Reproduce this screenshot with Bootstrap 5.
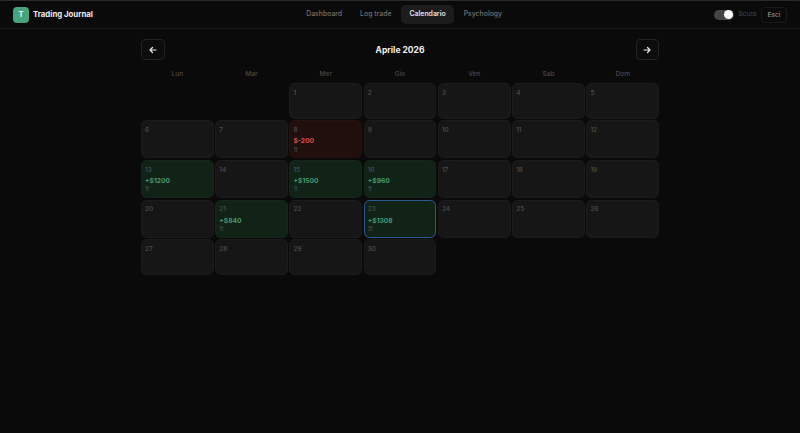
<!doctype html>
<html lang="it"><head><meta charset="utf-8"><title>Trading Journal</title>
<link rel="stylesheet" href="https://cdn.jsdelivr.net/npm/bootstrap@5.3.0/dist/css/bootstrap.min.css">
<style>
html,body{height:100%}
body{background:#0a0a0a;font-family:Inter,"Liberation Sans",sans-serif;color:#f2f2f2;border-top:1px solid #2a2a2a;overflow:hidden}
.topbar{height:28px;padding:0 13px;border-bottom:1px solid #1a1a1a}
.logo{width:16px;height:16px;border-radius:4px;background:#46a37c;color:#e9f5ef;font-size:7.5px;font-weight:700}
.brand{font-size:7.8px;font-weight:700;color:#eee;margin-left:4px}
.tabs{gap:2px;padding-left:1px}
.tab{font-size:6.9px;font-weight:500;color:#707070;padding:0 8px;height:18.7px;line-height:18.7px;border-radius:5px;text-decoration:none}
.tab.active{background:#1c1c1c;color:#e4e4e4;font-weight:600}
.sw{width:19.5px;height:10px;border-radius:5px;background:#444}
.knob{width:9px;height:9px;border-radius:50%;background:#fff;margin:.5px 1px .5px auto}
.mode{font-size:6.6px;color:#4a4a4a;margin:0 4.5px}
.logout{font-size:6.6px;font-weight:500;color:#8c8c8c;border:1px solid #1b1b1b;border-radius:4px;padding:0;width:26px;height:16px;line-height:14px;background:transparent}
.wrap{width:518px;margin:0 auto;padding-top:10.3px}
.navbtn{width:23.5px;height:20.5px;border:1px solid #222;border-radius:4px;background:#0c0c0c;padding:0}
.month{font-size:8.5px;font-weight:700;color:#f2f2f2;padding-top:1px}
.dow{font-size:6.6px;color:#484848;font-weight:500;text-align:center;line-height:8px}
.cal{display:grid;grid-template-columns:repeat(7,1fr);gap:1.7px}
.hdr{height:23.2px;padding-top:10.5px}
.cell{min-height:35.6px;border-radius:5.5px;background:#161616;border:1px solid #1c1c1c;padding:5.7px 3px 4px;line-height:1}
.num{font-size:6.4px;color:#505050;font-weight:500;display:block;margin-bottom:3.3px;height:7px;line-height:7px}
.pnl{font-size:6.7px;font-weight:700;display:block;height:9px;line-height:9px}
.tr{font-size:5.5px;color:#525252;display:block;margin-top:1.5px;line-height:5.5px}
.win{background:#112217;border-color:#14271a}
.win .pnl{color:#429c74}
.loss{background:#200f0d;border-color:#271210}
.loss .pnl{color:#d84f4f}
.today{border-color:#2c5a94}
.empty{background:none;border:0}
</style></head><body>
<nav class="topbar d-flex align-items-center">
  <div class="d-flex align-items-center"><span class="logo d-flex align-items-center justify-content-center">T</span><span class="brand">Trading Journal</span></div>
  <div class="tabs d-flex align-items-center flex-grow-1 justify-content-center">
    <a class="tab" href="#">Dashboard</a><a class="tab" href="#">Log trade</a><a class="tab active" href="#">Calendario</a><a class="tab" href="#">Psychology</a>
  </div>
  <div class="d-flex align-items-center"><span class="sw d-flex"><span class="knob"></span></span><span class="mode">Scuro</span><button class="logout btn">Esci</button></div>
</nav>
<main class="wrap">
  <div class="d-flex justify-content-between align-items-center">
    <button class="navbtn btn d-flex align-items-center justify-content-center" aria-label="Precedente"><svg width="8" height="8" viewBox="0 0 16 16" fill="none" stroke="#e8e8e8" stroke-width="2.4" stroke-linecap="round" stroke-linejoin="round"><path d="M14 8H2M7 3 2 8l5 5"/></svg></button>
    <div class="month">Aprile 2026</div>
    <button class="navbtn btn d-flex align-items-center justify-content-center" aria-label="Successivo"><svg width="8" height="8" viewBox="0 0 16 16" fill="none" stroke="#e8e8e8" stroke-width="2.4" stroke-linecap="round" stroke-linejoin="round"><path d="M2 8h12M9 3l5 5-5 5"/></svg></button>
  </div>
  <div class="cal hdr"><div class="dow">Lun</div><div class="dow">Mar</div><div class="dow">Mer</div><div class="dow">Gio</div><div class="dow">Ven</div><div class="dow">Sab</div><div class="dow">Dom</div></div>
  <div class="cal" id="g">
    <div class="cell empty"></div><div class="cell empty"></div>
    <div class="cell"><span class="num">1</span></div><div class="cell"><span class="num">2</span></div><div class="cell"><span class="num">3</span></div><div class="cell"><span class="num">4</span></div><div class="cell"><span class="num">5</span></div>
    <div class="cell"><span class="num">6</span></div><div class="cell"><span class="num">7</span></div>
    <div class="cell loss"><span class="num">8</span><span class="pnl">$-200</span><span class="tr">1t</span></div>
    <div class="cell"><span class="num">9</span></div><div class="cell"><span class="num">10</span></div><div class="cell"><span class="num">11</span></div><div class="cell"><span class="num">12</span></div>
    <div class="cell win"><span class="num">13</span><span class="pnl">+$1200</span><span class="tr">1t</span></div>
    <div class="cell"><span class="num">14</span></div>
    <div class="cell win"><span class="num">15</span><span class="pnl">+$1500</span><span class="tr">1t</span></div>
    <div class="cell win"><span class="num">16</span><span class="pnl">+$960</span><span class="tr">1t</span></div>
    <div class="cell"><span class="num">17</span></div><div class="cell"><span class="num">18</span></div><div class="cell"><span class="num">19</span></div>
    <div class="cell"><span class="num">20</span></div>
    <div class="cell win"><span class="num">21</span><span class="pnl">+$840</span><span class="tr">1t</span></div>
    <div class="cell"><span class="num">22</span></div>
    <div class="cell win today"><span class="num">23</span><span class="pnl">+$1308</span><span class="tr">2t</span></div>
    <div class="cell"><span class="num">24</span></div><div class="cell"><span class="num">25</span></div><div class="cell"><span class="num">26</span></div>
    <div class="cell"><span class="num">27</span></div><div class="cell"><span class="num">28</span></div><div class="cell"><span class="num">29</span></div><div class="cell"><span class="num">30</span></div>
  </div>
</main>
<script src="https://cdn.jsdelivr.net/npm/bootstrap@5.3.0/dist/js/bootstrap.bundle.min.js"></script>
</body></html>
